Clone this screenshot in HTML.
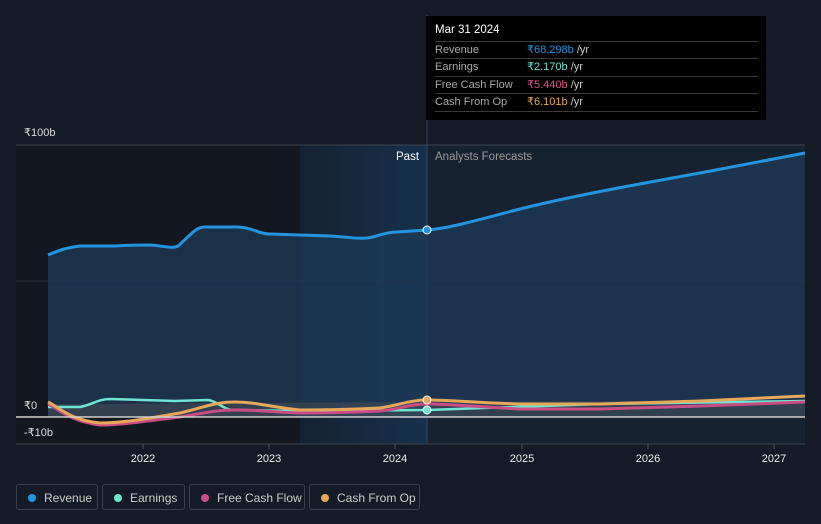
<!DOCTYPE html>
<html><head><meta charset="utf-8"><style>
body{margin:0;background:#151b26;width:821px;height:524px;overflow:hidden;font-family:"Liberation Sans",sans-serif}
svg{position:absolute;left:0;top:0}
.tt{position:absolute;left:426px;top:16px;width:340px;height:104px;background:#000;color:#ddd;font-size:11px}
.tt .h{position:absolute;left:9px;top:8px;color:#fff;font-size:11.5px}
.row{position:absolute;left:9px;width:323px;height:17px;border-top:1px solid #3a3a3a;line-height:17px;color:#aaa}
.row span{position:absolute;left:92px}
.leg{position:absolute;top:484px;height:26px;border:1px solid #3b414c;border-radius:3px;color:#ccc;font-size:12px;line-height:26px;box-sizing:border-box}
.leg i{position:absolute;left:11px;top:9px;width:8px;height:8px;border-radius:50%}
.leg b{font-weight:normal;position:absolute;left:27px}
</style></head><body>
<svg width="821" height="524" viewBox="0 0 821 524">
<defs>
<linearGradient id="hl" x1="0" x2="1"><stop offset="0" stop-color="#142234"/><stop offset="1" stop-color="#17314b"/></linearGradient>
</defs>
<rect x="16" y="145" width="284" height="299" fill="#131820"/>
<rect x="300" y="145" width="127" height="299" fill="url(#hl)"/>
<rect x="427" y="145" width="378" height="299" fill="#172231"/>
<line x1="16" y1="145" x2="805" y2="145" stroke="#3d4451"/>
<line x1="16" y1="281" x2="805" y2="281" stroke="#2a313d"/>
<line x1="427" y1="15" x2="427" y2="444" stroke="#2b4a66"/>
<path d="M48,255 C60,250 65,248 80,246 L115,246 C130,245 140,245 150,245 C165,246 172,249 178,246 C190,236 195,227 205,227 L238,227 C255,228 258,234 270,234 L300,235 L330,236 C350,237 355,239 367,238 C380,236 385,232 397,232 L427,230 C450,228 470,222 520,209 C560,199 600,191 700,173 L805,153 L805,417 L48,417Z" fill="#1d3a56" fill-opacity="0.75"/>
<path d="M48,255 C60,250 65,248 80,246 L115,246 C130,245 140,245 150,245 C165,246 172,249 178,246 C190,236 195,227 205,227 L238,227 C255,228 258,234 270,234 L300,235 L330,236 C350,237 355,239 367,238 C380,236 385,232 397,232 L427,230 C450,228 470,222 520,209 C560,199 600,191 700,173 L805,153" fill="none" stroke="#2394df" stroke-width="3"/>
<path d="M48,404 L805,400 L805,417 L48,417Z" fill="#4a4f58" fill-opacity="0.5"/>
<path d="M48,407 L80,407 C92,405 98,399 110,399 L175,401 L208,400 C220,402 222,410 235,410 L300,411 L427,410 C470,409 520,407 600,404 L805,401" fill="none" stroke="#6ee7d2" stroke-width="2.5"/>
<path d="M48,404 C60,410 70,421 100,425 C120,425 140,422 180,417 C205,413 215,410 235,410 C260,410 270,412 300,413 C340,413 360,412 380,411 C400,409 410,404 427,404 C450,404 480,407 520,409 L600,409 L700,406 L805,402" fill="none" stroke="#c94c86" stroke-width="3"/>
<path d="M48,402 C60,408 70,420 100,423 C120,423 140,420 180,413 C205,407 215,402 235,402 C255,402 270,407 300,410 C340,410 360,409 380,408 C400,405 410,400 427,400 C450,400 480,403 520,404 L600,404 L700,401 L805,396" fill="none" stroke="#e8a85a" stroke-width="3"/>
<line x1="16" y1="417" x2="805" y2="417" stroke="#d0d0d0" stroke-width="1.5"/>
<line x1="16" y1="444" x2="805" y2="444" stroke="#3d4451"/>
<g stroke="#555" ><line x1="143" y1="444" x2="143" y2="449"/><line x1="269" y1="444" x2="269" y2="449"/><line x1="395" y1="444" x2="395" y2="449"/><line x1="522" y1="444" x2="522" y2="449"/><line x1="648" y1="444" x2="648" y2="449"/><line x1="774" y1="444" x2="774" y2="449"/></g>
<circle cx="427" cy="230" r="4" fill="#2394df" stroke="#fff" stroke-width="1"/>
<circle cx="427" cy="400" r="4" fill="#e8a85a" stroke="#fff" stroke-width="1"/>
<circle cx="427" cy="410" r="4" fill="#6ee7d2" stroke="#fff" stroke-width="1"/>
<g font-family="Liberation Sans,sans-serif" font-size="11" fill="#ddd">
<text x="24" y="136">₹100b</text>
<text x="24" y="409">₹0</text>
<text x="24" y="436">-₹10b</text>
<text x="396" y="160" fill="#fff" font-size="11.5">Past</text>
<text x="435" y="160" fill="#999" font-size="11.5">Analysts Forecasts</text>
<g text-anchor="middle" fill="#eee"><text x="143" y="462">2022</text><text x="269" y="462">2023</text><text x="395" y="462">2024</text><text x="522" y="462">2025</text><text x="648" y="462">2026</text><text x="774" y="462">2027</text></g>
</g>
</svg>
<div class="tt"><div class="h">Mar 31 2024</div>
<div class="row" style="top:25px">Revenue<span style="color:#2394df">₹68.298b <em style="font-style:normal;color:#ccc">/yr</em></span></div>
<div class="row" style="top:42px">Earnings<span style="color:#6ee7d2">₹2.170b <em style="font-style:normal;color:#ccc">/yr</em></span></div>
<div class="row" style="top:60px">Free Cash Flow<span style="color:#d94f8a">₹5.440b <em style="font-style:normal;color:#ccc">/yr</em></span></div>
<div class="row" style="top:77px;border-bottom:1px solid #3a3a3a">Cash From Op<span style="color:#e8a85a">₹6.101b <em style="font-style:normal;color:#ccc">/yr</em></span></div>
</div>
<div class="leg" style="left:16px;width:82px"><i style="background:#2394df"></i><b>Revenue</b></div>
<div class="leg" style="left:102px;width:83px"><i style="background:#6ee7d2"></i><b>Earnings</b></div>
<div class="leg" style="left:189px;width:116px"><i style="background:#c94c86"></i><b>Free Cash Flow</b></div>
<div class="leg" style="left:309px;width:111px"><i style="background:#e8a85a"></i><b>Cash From Op</b></div>
</body></html>
